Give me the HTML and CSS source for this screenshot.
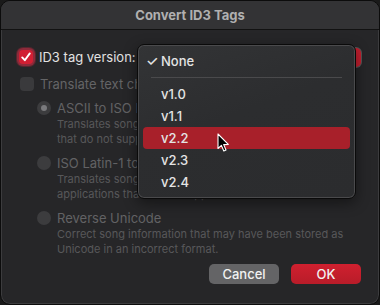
FILE: index.html
```html
<!DOCTYPE html>
<html lang="en">

<head>
    <meta charset="UTF-8">
    <title>Convert ID3 Tags</title>
    <link rel="stylesheet" href="styles.css">
</head>

<body>

    <div class="window">

        <div class="titlebar">Convert ID3 Tags</div>

        <div class="content">

            <!-- ID3 version row -->
            <div class="row">
                <span class="checkbox checked">
                    <svg width="12" height="12" viewBox="0 0 12 12"><path d="M2.2 6.4 L4.8 9.2 L9.8 2.4" fill="none" stroke="#fff" stroke-width="1.9" stroke-linecap="round" stroke-linejoin="round"/></svg>
                </span>
                <span class="label">ID3 tag version:</span>
                <span class="popup"></span>
            </div>

            <div class="row row-disabled">
                <span class="checkbox"></span>
                <span class="label">Translate text ch</span>
            </div>

            <div class="option first">
                <div class="option-head">
                    <span class="radio selected"></span>
                    <span class="label">ASCII to ISO L</span>
                </div>
                <p class="desc">Translates song<br>that do not supp</p>
            </div>

            <div class="option">
                <div class="option-head">
                    <span class="radio"></span>
                    <span class="label">ISO Latin-1 to</span>
                </div>
                <p class="desc">Translates song<br>applications that do not support ISO Latin-1 characters.</p>
            </div>

            <div class="option">
                <div class="option-head">
                    <span class="radio"></span>
                    <span class="label">Reverse Unicode</span>
                </div>
                <p class="desc">Correct song information that may have been stored as<br>Unicode in an incorrect format.</p>
            </div>

            <div class="buttons">
                <button class="btn btn-cancel">Cancel</button>
                <button class="btn btn-ok">OK</button>
            </div>

        </div>

        <!-- open popup menu -->
        <div class="menu">
            <div class="menu-item"><span class="tick">&#10003;</span>None</div>
            <div class="menu-sep"></div>
            <div class="menu-item">v1.0</div>
            <div class="menu-item">v1.1</div>
            <div class="menu-item active">v2.2</div>
            <div class="menu-item">v2.3</div>
            <div class="menu-item">v2.4</div>
        </div>

        <svg class="cursor" width="13" height="20" viewBox="0 0 13 20">
            <path d="M1 1 L1 15.5 L4.4 12.4 L6.8 18 L9 17 L6.7 11.6 L11.3 11.4 Z" fill="#000" stroke="#fff" stroke-width="1.1" stroke-linejoin="round"/>
        </svg>

    </div>

</body>

</html>
```

FILE: styles.css
```css
html,
body {
    margin: 0;
    padding: 0;
    background-color: #1a1a1a;
}

body {
    font-family: 'Inter', 'Liberation Sans', sans-serif;
    font-size: 13px;
    color: #e2e2e2;
}

.window {
    position: relative;
    width: 378px;
    height: 303px;
    border: 1px solid #0c0c0c;
    border-radius: 10px;
    background-color: #262628;
    overflow: hidden;
    box-shadow: inset 0 0 0 1px #3c3c3e;
}

.titlebar {
    height: 28px;
    line-height: 28px;
    text-align: center;
    font-weight: 700;
    font-size: 13px;
    color: #b0b0b0;
    background-color: #333335;
    border-bottom: 1px solid #121212;
}

.content {
    padding: 17px 18px 0 17px;
}

.row {
    display: flex;
    align-items: center;
    height: 20px;
}

.row .label {
    margin-left: 6px;
}

.row-disabled {
    margin-top: 7px;
    color: #646466;
}

.row-disabled .checkbox {
    margin-left: 2px;
}

.checkbox {
    display: flex;
    align-items: center;
    justify-content: center;
    width: 14px;
    height: 14px;
    border-radius: 4px;
    background-color: #3a3a3c;
}

.checkbox.checked {
    background-color: #d11f33;
    box-shadow: 0 0 0 2px #8e2a3a, 0 0 0 3px rgba(180, 40, 60, 0.35);
    margin-left: 1px;
}

.popup {
    margin-left: auto;
    width: 60px;
    height: 19px;
    border-radius: 5px;
    background-color: #c41f2f;
    box-shadow: 0 0 0 1px #555;
}

.option {
    margin-top: 6px;
    padding-left: 19px;
    color: #626264;
}

.option.first {
    margin-top: 4px;
}

.option-head {
    display: flex;
    align-items: center;
    height: 20px;
}

.option-head .label {
    margin-left: 6px;
}

.radio {
    width: 14px;
    height: 14px;
    border-radius: 50%;
    background-color: #3c3c3e;
    display: flex;
    align-items: center;
    justify-content: center;
}

.radio.selected::after {
    content: "";
    width: 6px;
    height: 6px;
    border-radius: 50%;
    background-color: #7a7a7d;
}

.desc {
    margin: -1px 0 0 20px;
    font-size: 11px;
    line-height: 15px;
    color: #58585a;
    white-space: nowrap;
}

.buttons {
    display: flex;
    justify-content: flex-end;
    gap: 12px;
    margin-top: 7px;
}

.btn {
    width: 70px;
    height: 20px;
    border: none;
    border-radius: 5px;
    font-family: 'Inter', 'Liberation Sans', sans-serif;
    font-size: 13px;
    font-weight: 500;
    color: #f2f2f2;
    padding: 0;
}

.btn-cancel {
    background-color: #646466;
}

.btn-ok {
    background: linear-gradient(#d0202f, #b81c29);
}

.menu {
    position: absolute;
    left: 136px;
    top: 43px;
    width: 217px;
    padding: 5px 0;
    border: 1px solid #0a0a0a;
    border-radius: 7px;
    background: linear-gradient(160deg, #333436 0%, #2c2d2f 45%, #2b2c2e 100%);
    box-shadow: inset 0 0 0 1px #4a4a4c, 0 4px 14px rgba(0, 0, 0, 0.45);
}

.menu-item {
    position: relative;
    height: 22px;
    line-height: 22px;
    margin: 0 5px;
    padding-left: 18px;
    border-radius: 4px;
    color: #e4e4e4;
    font-size: 13px;
    font-weight: 500;
}

.menu-item .tick {
    position: absolute;
    left: 3px;
    font-size: 14px;
}

.menu-item.active {
    background-color: #a8202a;
}

.menu-sep {
    height: 1px;
    margin: 5px 13px;
    background-color: #4a4a4c;
}

.cursor {
    position: absolute;
    left: 216px;
    top: 132px;
}
```
